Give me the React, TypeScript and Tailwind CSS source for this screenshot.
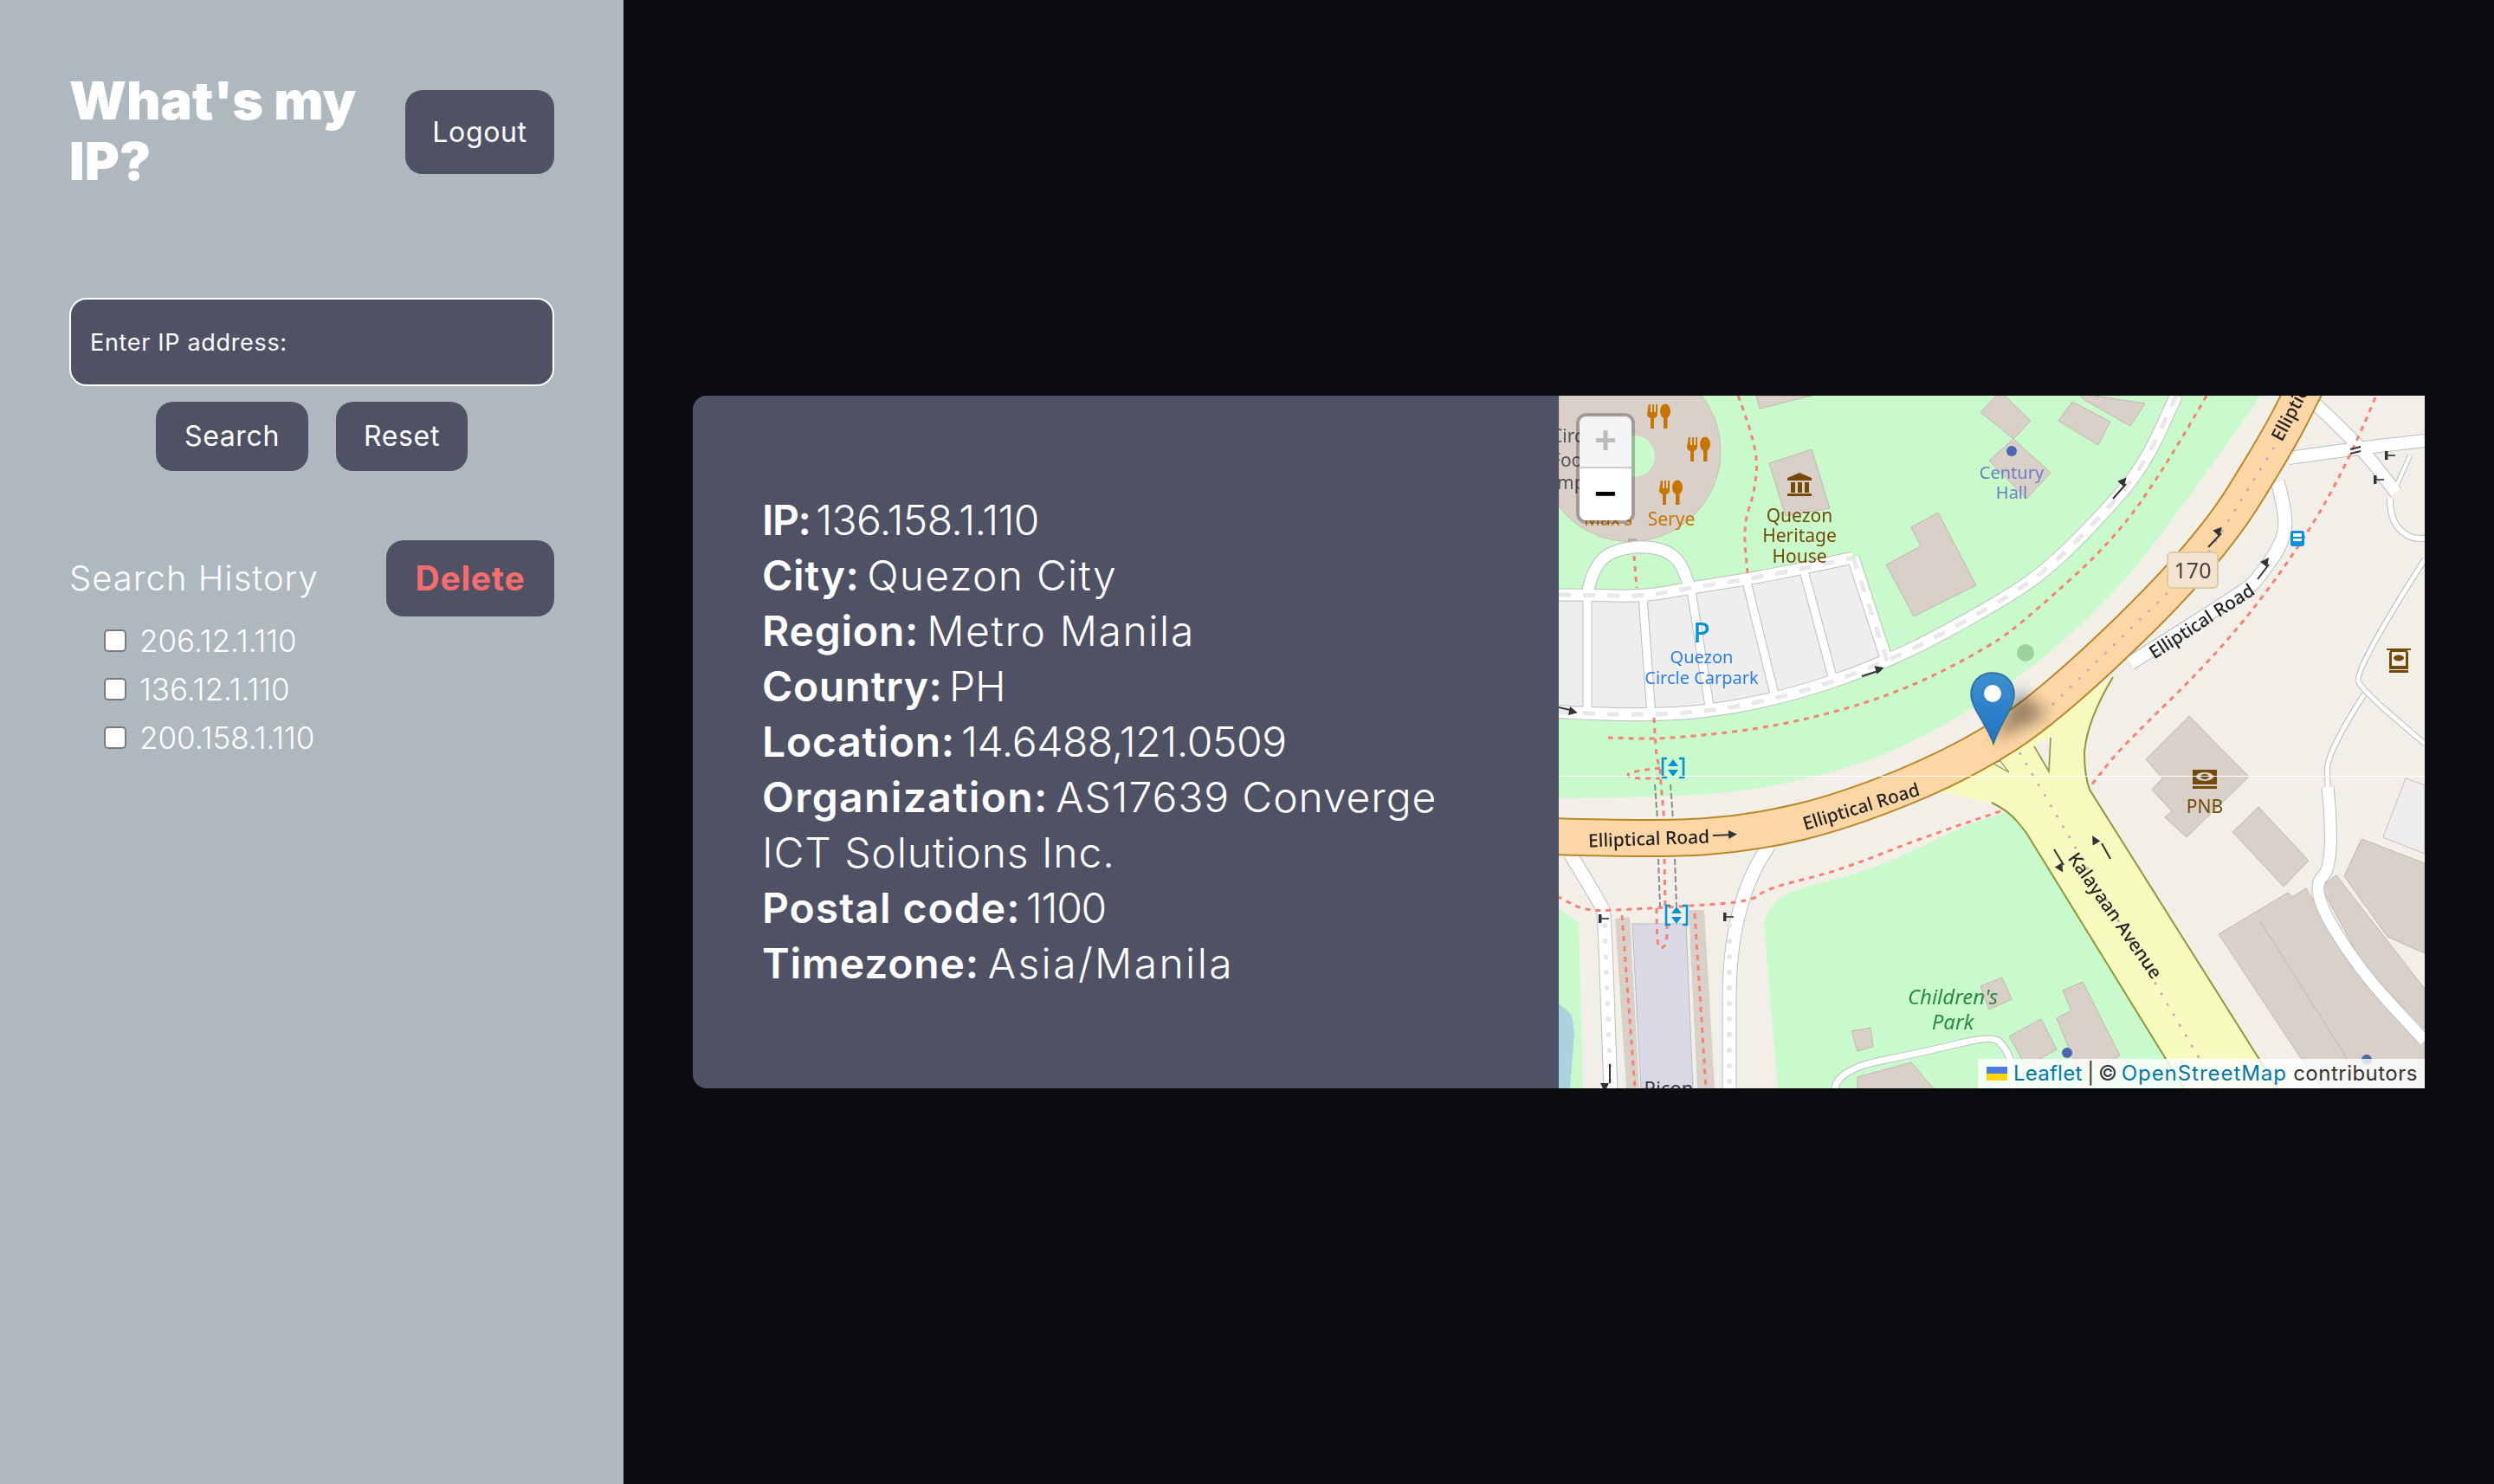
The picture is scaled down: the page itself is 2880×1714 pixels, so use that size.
import React from 'react';

type Pt = [number, number];

// smooth path through map points, so roads and park edges don't look polygonal
const smooth = (pts: Pt[], close = false) => {
    let d = `M${pts[0][0]} ${pts[0][1]}`;
    for (let i = 1; i < pts.length - 1; i++) {
        const mx = (pts[i][0] + pts[i + 1][0]) / 2;
        const my = (pts[i][1] + pts[i + 1][1]) / 2;
        d += ` Q${pts[i][0]} ${pts[i][1]} ${mx} ${my}`;
    }
    const last = pts[pts.length - 1];
    d += ` L${last[0]} ${last[1]}`;
    return close ? d + ' Z' : d;
};

const poly = (pts: Pt[]) => pts.map((p) => p.join(',')).join(' ');

const buildings: Pt[][] = [
    [[228, 0], [292, 0], [232, 15]],
    [[243, 78], [292, 62], [313, 130], [262, 139]],
    [[407, 152], [438, 135], [482, 219], [410, 255], [378, 195], [418, 174]],
    [[510, -5], [545, 29], [525, 50], [568, 89], [540, 119], [497, 75], [525, 50], [487, 19]],
    [[577, 29], [593, 7], [637, 30], [623, 57]],
    [[600, -3], [677, 9], [660, 35], [607, 5]],
    [[678, 420], [728, 370], [797, 440], [725, 510], [700, 487], [708, 480], [685, 455], [697, 442]],
    [[808, 475], [866, 537], [837, 567], [778, 504]],
    [[762, 622], [842, 574], [847, 579], [863, 569], [923, 669], [1000, 745], [1000, 800], [880, 800]],
    [[880, 567], [898, 554], [1000, 685], [1000, 732], [930, 659]],
    [[927, 512], [1000, 540], [1000, 644], [957, 625], [907, 555]],
    [[487, 682], [512, 672], [523, 697], [497, 709]],
    [[582, 687], [605, 677], [648, 762], [603, 788], [575, 719], [592, 710]],
    [[520, 740], [557, 720], [575, 755], [540, 775]],
    [[338, 734], [360, 730], [363, 752], [345, 757]],
    [[345, 787], [407, 770], [423, 789], [437, 805], [345, 805]],
];

const footways: Pt[][] = [
    [[748, 0], [707, 72], [643, 165], [547, 252], [500, 289], [390, 345], [257, 382], [123, 397], [57, 395]],
    [[207, 0], [230, 59], [227, 109], [213, 149], [218, 205]],
    [[87, 185], [90, 222]],
    [[110, 372], [112, 415], [117, 430], [118, 449], [122, 492]],
    [[122, 535], [123, 589]],
    [[117, 430], [80, 434], [80, 442], [117, 442]],
    [[113, 592], [113, 632], [118, 640], [125, 632], [125, 612]],
    [[510, 480], [423, 509], [323, 549], [240, 569], [223, 584], [157, 589], [70, 594], [30, 595], [0, 579]],
    [[943, 2], [913, 75], [853, 179], [767, 292], [647, 409], [627, 435], [613, 452]],
    [[73, 600], [88, 800]],
    [[157, 598], [170, 800]],
];

const whiteRoads: { pts: Pt[]; w: number }[] = [
    { pts: [[0, 230], [33, 230], [97, 232], [153, 222], [217, 212], [280, 200], [340, 187]], w: 13 },
    { pts: [[340, 187], [380, 309]], w: 13 },
    { pts: [[0, 365], [107, 372], [240, 355], [380, 309], [510, 238], [567, 199], [633, 132], [677, 79], [713, 0]], w: 14 },
    { pts: [[33, 230], [33, 362]], w: 9 },
    { pts: [[97, 232], [107, 370]], w: 9 },
    { pts: [[153, 225], [175, 365]], w: 9 },
    { pts: [[217, 215], [250, 349]], w: 9 },
    { pts: [[283, 202], [318, 332]], w: 9 },
    { pts: [[33, 230], [40, 190], [85, 172], [135, 180], [152, 222]], w: 13 },
    { pts: [[13, 529], [50, 589], [53, 602], [60, 805]], w: 15 },
    { pts: [[243, 519], [197, 585], [197, 805]], w: 15 },
    { pts: [[873, 9], [923, 55], [967, 112]], w: 14 },
    { pts: [[843, 72], [913, 62], [1000, 52]], w: 14 },
    { pts: [[830, 99], [840, 135], [837, 169], [807, 212], [793, 225], [660, 309]], w: 15 },
    { pts: [[983, 69], [967, 105]], w: 4 },
    { pts: [[960, 119], [960, 142], [980, 164], [1000, 165]], w: 6 },
    { pts: [[1000, 189], [917, 319], [930, 342], [1000, 402]], w: 5 },
    { pts: [[930, 345], [887, 412], [888, 452]], w: 5 },
    { pts: [[888, 452], [897, 542], [867, 569], [923, 662], [1000, 745]], w: 13 },
    { pts: [[318, 805], [318, 779], [427, 757], [500, 739], [515, 752], [523, 770], [525, 805]], w: 7 },
];

const orangeRoad: Pt[] = [[-10, 509], [117, 513], [225, 505], [330, 480], [465, 425], [570, 357], [750, 182], [832, 50], [862, -10]];

const arrows: [number, number, number, number][] = [
    [350, 324, 372, 317],
    [0, 360, 18, 364],
    [640, 119, 655, 102],
    [750, 175, 765, 159],
    [807, 212, 820, 195],
    [59, 772, 59, 794],
    [572, 524, 583, 542],
    [637, 535, 627, 517],
    [178, 508, 202, 507],
];

const Arrow = ({ a }: { a: [number, number, number, number] }) => {
    const [x1, y1, x2, y2] = a;
    const ang = (Math.atan2(y2 - y1, x2 - x1) * 180) / Math.PI;
    return (
        <g>
            <line x1={x1} y1={y1} x2={x2} y2={y2} stroke="#333" strokeWidth="2" />
            <polygon points="0,-5 10,0 0,5" fill="#333" transform={`translate(${x2 - 6} ${y2}) rotate(${ang})`} />
        </g>
    );
};

const Food = ({ x, y }: { x: number; y: number }) => (
    <g transform={`translate(${x} ${y})`} fill="#c77400">
        <path d="M-12 -14h2v9h2v-9h2v9h2v-9h2v11q0 4-4 5v12h-4V2q-4-1-4-5z" />
        <ellipse cx="7" cy="-6" rx="6" ry="8.5" />
        <rect x="5" y="0" width="4.5" height="14" />
    </g>
);

const Elevator = ({ x, y }: { x: number; y: number }) => (
    <g transform={`translate(${x} ${y})`}>
        <path d="M-7 -11h-5v22h5M7 -11h5v22h-5" fill="none" stroke="#0092da" strokeWidth="2.6" />
        <path d="M0 -10l6 8h-12zM0 10l6 -8h-12z" fill="#0092da" />
    </g>
);

const Barrier = ({ x, y, r = 0 }: { x: number; y: number; r?: number }) => (
    <g transform={`translate(${x} ${y}) rotate(${r})`}>
        <rect x="-6" y="-5" width="3.5" height="10" fill="#333" />
        <rect x="-3" y="-1" width="9" height="2" fill="#555" />
    </g>
);

const MapTiles = () => (
    <svg viewBox="0 0 1000 800" className="h-full w-full blur-[0.6px]" fontFamily="'Noto Sans', sans-serif">
        <defs>
            <linearGradient id="pin" x1="0" y1="0" x2="0" y2="1">
                <stop offset="0" stopColor="#3d8fcf" />
                <stop offset="1" stopColor="#1f74c4" />
            </linearGradient>
        </defs>
        <rect width="1000" height="800" fill="#f2efe9" />
        {/* parks */}
        <path d={smooth([[810, 0], [787, 35], [733, 109], [667, 199], [600, 269], [527, 329], [423, 395], [323, 435], [190, 462], [0, 465]]) + ' L0 0 Z'} fill="#c8facc" />
        <path d={smooth([[237, 609], [243, 589], [267, 572], [357, 549], [423, 519], [473, 495], [520, 480]]) + ' L540 505 L722 800 L253 800 Z'} fill="#c8facc" />
        <polygon points="0,592 23,609 28,800 0,800" fill="#c8facc" />
        <path d="M0 702L15 715L18 735L13 800H0Z" fill="#aad3df" />

        {/* carpark and food court */}
        <path d={smooth([[0, 232], [97, 232], [153, 222], [217, 212], [280, 200], [340, 187]]) + ' L380 309 ' + 'L240 355 L107 372 L0 365 Z'} fill="#eeeeee" />
        <path d="M0 0H165A95 95 0 0 1 0 128Z" fill="#d9d0c9" stroke="#c9bdb3" strokeWidth="1" />
        <circle cx="87" cy="70" r="24" fill="#c8facc" />
        <rect x="80" y="165" width="10" height="9" fill="#b8aa9c" />
        <polygon points="978,442 1000,450 1000,529 952,510" fill="#eeeeee" stroke="#d8b9b9" />

        {buildings.map((b, i) => (
            <polygon key={i} points={poly(b)} fill="#d9d0c9" stroke="#c4b6ab" strokeWidth="1" />
        ))}
        <line x1="810" y1="607" x2="910" y2="765" stroke="#c4b6ab" />

        {/* station block at the bottom */}
        <polygon points="65,604 82,602 93,800 78,800" fill="#d9d0c9" />
        <polygon points="150,594 168,594 180,800 160,800" fill="#d9d0c9" />
        <polygon points="85,610 147,610 155,800 95,800" fill="#d9dae6" stroke="#b9bac6" />

        {whiteRoads.map((r, i) => (
            <path key={i} d={smooth(r.pts)} fill="none" stroke="#bdbdbd" strokeWidth={r.w + 2} strokeLinejoin="round" />
        ))}
        {whiteRoads.map((r, i) => (
            <path key={i} d={smooth(r.pts)} fill="none" stroke="#ffffff" strokeWidth={r.w} strokeLinejoin="round" />
        ))}
        {whiteRoads.slice(0, 3).map((r, i) => (
            <path key={i} d={smooth(r.pts)} fill="none" stroke="#e8e8e8" strokeWidth="5" strokeDasharray="14 14" />
        ))}
        <path d="M53 612L60 800M197 612V800" fill="none" stroke="#e6e6e6" strokeWidth="6" strokeLinecap="round" strokeDasharray="0 18" />

        {/* footbridge rails */}
        <path d="M111 449L114 490M129 449L132 490M115 535L117 590M134 535L136 590" stroke="#8a8a8a" strokeWidth="2" strokeDasharray="7 3" fill="none" />
        {footways.map((f, i) => (
            <path key={i} d={smooth(f)} fill="none" stroke="#fa8072" strokeWidth="3" strokeDasharray="6 6" />
        ))}

        {/* Kalayaan Avenue */}
        <path d={smooth([[440, 457], [500, 470], [520, 480], [540, 505]]) + ' L722 800 L830 800 L613 455 ' + 'Q607 439 607 412 Q610 375 640 325 L560 380 Z'} fill="#f7fabf" />
        <path d={smooth([[500, 470], [520, 480], [540, 505]]) + ' L722 800'} fill="none" stroke="#8a9a38" strokeWidth="2" />
        <path d="M830 800L613 455Q607 439 607 412Q610 375 640 325" fill="none" stroke="#8a9a38" strokeWidth="2" />
        <polygon points="549,405 566,434 568,395" fill="#f2efe9" />
        <path d="M549 405L566 434L568 395" fill="none" stroke="#8a9a38" strokeWidth="1.6" />
        <polygon points="500,424 520,435 510,422" fill="#f2efe9" stroke="#8a9a38" strokeWidth="1.2" />
        <line x1="525" y1="400" x2="760" y2="800" stroke="#b9a9c0" strokeWidth="2.5" strokeDasharray="3 11" />

        {/* Elliptical Road */}
        <path d={smooth(orangeRoad)} fill="none" stroke="#b9872a" strokeWidth="44" />
        <path d={smooth(orangeRoad)} fill="none" stroke="#fcd6a4" strokeWidth="40" />
        <path d="M570 357L750 182L832 50" fill="none" stroke="#b9a9c0" strokeWidth="2.5" strokeDasharray="3 11" />

        {arrows.map((a, i) => (
            <Arrow key={i} a={a} />
        ))}

        <Barrier x={52} y={604} />
        <Barrier x={196} y={602} />
        <Barrier x={960} y={69} />
        <Barrier x={947} y={97} />
        <path d="M914 62l12 -3M914 67l12 -3" stroke="#333" strokeWidth="2" />

        {/* poi icons */}
        <Food x={116} y={24} />
        <Food x={162} y={62} />
        <Food x={130} y={112} />
        <path d="M264 95L278 89L292 95V98H264ZM268 100H273V112H268ZM276 100H281V112H276ZM284 100H289V112H284ZM264 113H292V116H264Z" fill="#734a08" />
        <circle cx="523" cy="64" r="6" fill="#4d66b0" />
        <circle cx="587" cy="759" r="6" fill="#4d66b0" />
        <circle cx="933" cy="767" r="6" fill="#4d66b0" />
        <circle cx="539" cy="297" r="10" fill="#8fc98f" opacity="0.8" />
        <Elevator x={132} y={430} />
        <Elevator x={136} y={600} />
        <g fill="#0092da">
            <rect x="845" y="156" width="16" height="18" rx="3" />
            <rect x="848" y="159" width="10" height="4" fill="#ffffff" />
            <rect x="848" y="165" width="10" height="3" fill="#ffffff" />
        </g>
        <g fill="#734a08">
            <path d="M956 292h28v2h-4v2h-20v-2h-4z" />
            <path d="M959 296h3v16h16v-16h3v20h-22z" />
            <ellipse cx="970" cy="303" rx="6" ry="3.5" />
            <rect x="959" y="317" width="22" height="3" />
            <rect x="732" y="432" width="28" height="17" />
            <rect x="732" y="451" width="28" height="3" />
        </g>
        <ellipse cx="746" cy="440" rx="10" ry="5" fill="#d9d0c9" />
        <ellipse cx="746" cy="440" rx="5" ry="3" fill="#734a08" />

        {/* shield */}
        <rect x="703" y="181" width="58" height="41" rx="5" fill="#f4e3cf" stroke="#dcc9a8" strokeWidth="2" />
        <text x="732" y="211" textAnchor="middle" fontSize="25" fill="#444">170</text>

        {/* labels */}
        <g fontSize="21" fill="#222" fontWeight="500">
            <text x="104" y="519" textAnchor="middle" transform="rotate(-2 104 511)">Elliptical Road</text>
            <text x="349" y="482" textAnchor="middle" transform="rotate(-17 349 474)">Elliptical Road</text>
            <text x="742" y="268" textAnchor="middle" transform="rotate(-33 742 260)">Elliptical Road</text>
            <text x="835" y="54" transform="rotate(-62 835 54)">Elliptical Road</text>
            <text x="643" y="608" textAnchor="middle" transform="rotate(55 643 600)">Kalayaan Avenue</text>
        </g>
        <g fontSize="21" textAnchor="middle" fill="#734a08">
            <text x="278" y="146">Quezon</text>
            <text x="278" y="169">Heritage</text>
            <text x="278" y="193">House</text>
            <text x="746" y="482">PNB</text>
        </g>
        <text x="130" y="150" fontSize="21" textAnchor="middle" fill="#c77400">Serye</text>
        <text x="57" y="150" fontSize="21" textAnchor="middle" fill="#c77400">Max's</text>
        <g fontSize="21" fill="#555">
            <text x="-9" y="54">Circ</text>
            <text x="-9" y="82">Food</text>
            <text x="-9" y="108">Imp</text>
        </g>
        <text x="165" y="285" fontSize="32" textAnchor="middle" fill="#0092da" fontWeight="500">P</text>
        <g fontSize="20" textAnchor="middle" fill="#2f7bf0">
            <text x="165" y="309">Quezon</text>
            <text x="165" y="333">Circle Carpark</text>
        </g>
        <g fontSize="20" textAnchor="middle" fill="#6a7fbf">
            <text x="523" y="96">Century</text>
            <text x="523" y="119">Hall</text>
        </g>
        <g fontSize="24" textAnchor="middle" fill="#2a8c44" fontStyle="italic">
            <text x="455" y="703">Children's</text>
            <text x="455" y="732">Park</text>
        </g>
        <text x="127" y="808" fontSize="22" textAnchor="middle" fill="#333">Ricon</text>

        {/* tile seam */}
        <line x1="0" y1="439.5" x2="1000" y2="439.5" stroke="#ffffff" strokeWidth="1.2" />

        {/* marker */}
        <polygon points="503,398 565,368 530,340" fill="#000" opacity="0.4" style={{ filter: 'blur(9px)' }} />
        <path d="M501 320C485 320 476 332 476 345C476 360 493 378 502 402C510 378 526 360 526 345C526 332 517 320 501 320Z" fill="url(#pin)" stroke="#2e6c97" strokeWidth="1.5" />
        <circle cx="501" cy="344" r="10" fill="#ffffff" />
    </svg>
);

// tracking per row makes up for Inter's widths against the original font
const infoRows: { label: string; value: string; track: string; labelTrack: string }[] = [
    { label: 'IP:', value: '136.158.1.110', track: 'tracking-[-0.6px]', labelTrack: 'tracking-[-1.4px]' },
    { label: 'City:', value: 'Quezon City', track: 'tracking-[1.2px]', labelTrack: 'tracking-[0.6px]' },
    { label: 'Region:', value: 'Metro Manila', track: 'tracking-[1.6px]', labelTrack: 'tracking-[0.8px]' },
    { label: 'Country:', value: 'PH', track: 'tracking-[0px]', labelTrack: 'tracking-[0.6px]' },
    { label: 'Location:', value: '14.6488,121.0509', track: 'tracking-[-0.4px]', labelTrack: 'tracking-[0.8px]' },
    { label: 'Organization:', value: 'AS17639 Converge ICT Solutions Inc.', track: 'tracking-[0.9px]', labelTrack: 'tracking-[1.4px]' },
    { label: 'Postal code:', value: '1100', track: 'tracking-[-1.2px]', labelTrack: 'tracking-[1px]' },
    { label: 'Timezone:', value: 'Asia/Manila', track: 'tracking-[2.4px]', labelTrack: 'tracking-[0.8px]' },
];

const history = ['206.12.1.110', '136.12.1.110', '200.158.1.110'];

export default function App() {
    return (
        <div className="flex h-screen bg-[#0b0c10] font-['Inter',sans-serif] text-white">
            <aside className="flex w-[720px] shrink-0 flex-col bg-[#adb8bf] px-20 pt-[81px]">
                <div className="flex items-center justify-between">
                    <h1 className="w-[350px] pb-[3px] text-[61px] leading-[70px] font-black">What's my IP?</h1>
                    <button className="h-[97px] w-[172px] rounded-[20px] bg-[#4f5165] text-[32px] tracking-[0.02em]">Logout</button>
                </div>

                <input
                    placeholder="Enter IP address:"
                    className="mt-[120px] h-[102px] w-full rounded-[20px] border-2 border-white bg-[#4f5165] px-[22px] text-[27px] tracking-[0.025em] placeholder:text-white"
                />

                <div className="mt-[18px] flex justify-center gap-8">
                    <button className="h-20 w-[176px] rounded-[20px] bg-[#4f5165] text-[32px] tracking-[0.02em]">Search</button>
                    <button className="h-20 w-[152px] rounded-[20px] bg-[#4f5165] text-[32px] tracking-[0.02em]">Reset</button>
                </div>

                <div className="mt-20 flex items-center justify-between">
                    <h2 className="text-[40px] font-light tracking-[0.025em]">Search History</h2>
                    <button className="h-[88px] w-[194px] rounded-[20px] bg-[#4f5165] text-[39px] font-bold tracking-[0.02em] text-[#f76c6c]">Delete</button>
                </div>

                <ul className="flex flex-col pl-10">
                    {history.map((ip) => (
                        <li key={ip} className="flex h-14 items-center gap-[15px] text-[35px] font-light">
                            <input type="checkbox" className="size-[26px] appearance-none rounded-[5px] border-2 border-[#7b7b7b] bg-white" />
                            <span>{ip}</span>
                        </li>
                    ))}
                </ul>
            </aside>

            <main className="flex flex-1 items-center justify-center px-20">
                <section className="flex h-[800px] w-full overflow-hidden rounded-l-2xl bg-[#4f5165]">
                    <div className="flex w-1/2 flex-col justify-center px-20">
                        {infoRows.map((row) => (
                            <p key={row.label} className={`text-[48px] leading-16 font-light ${row.track}`}>
                                <b className={`mr-[-6px] font-semibold ${row.labelTrack}`}>{row.label}</b> {row.value}
                            </p>
                        ))}
                    </div>
                    <div className="relative w-1/2 overflow-hidden">
                        <MapTiles />
                        {/* zoom control */}
                        <div className="absolute top-5 left-5 flex w-[68px] flex-col overflow-hidden rounded-xl border-4 border-black/25 font-['Liberation_Mono',monospace] font-bold">
                            <div className="flex h-[60px] items-center justify-center border-b-2 border-[#ccc] bg-[#f4f4f4] pt-[3px] text-[44px] text-[#bbb]">+</div>
                            <div className="flex h-[60px] items-center justify-center bg-white pt-[3px] text-[44px] text-black">−</div>
                        </div>
                        {/* attribution */}
                        <div className="absolute right-0 bottom-0 flex h-[34px] w-[516px] items-center gap-[7px] bg-white/80 pl-[10px] text-[24px] text-[#333]">
                            <span className="flex h-4 w-6 shrink-0 flex-col">
                                <span className="h-2 bg-[#4c7be1]" />
                                <span className="h-2 bg-[#ffd500]" />
                            </span>
                            <span className="whitespace-nowrap">
                                <span className="tracking-[0.01em] text-[#0078a8]">Leaflet</span>
                                <span className="tracking-[-1px]"> | © </span>
                                <span className="tracking-[0.04em] text-[#0078a8]">OpenStreetMap</span>
                                <span className="tracking-[0.02em]"> contributors</span>
                            </span>
                        </div>
                    </div>
                </section>
            </main>
        </div>
    );
}
